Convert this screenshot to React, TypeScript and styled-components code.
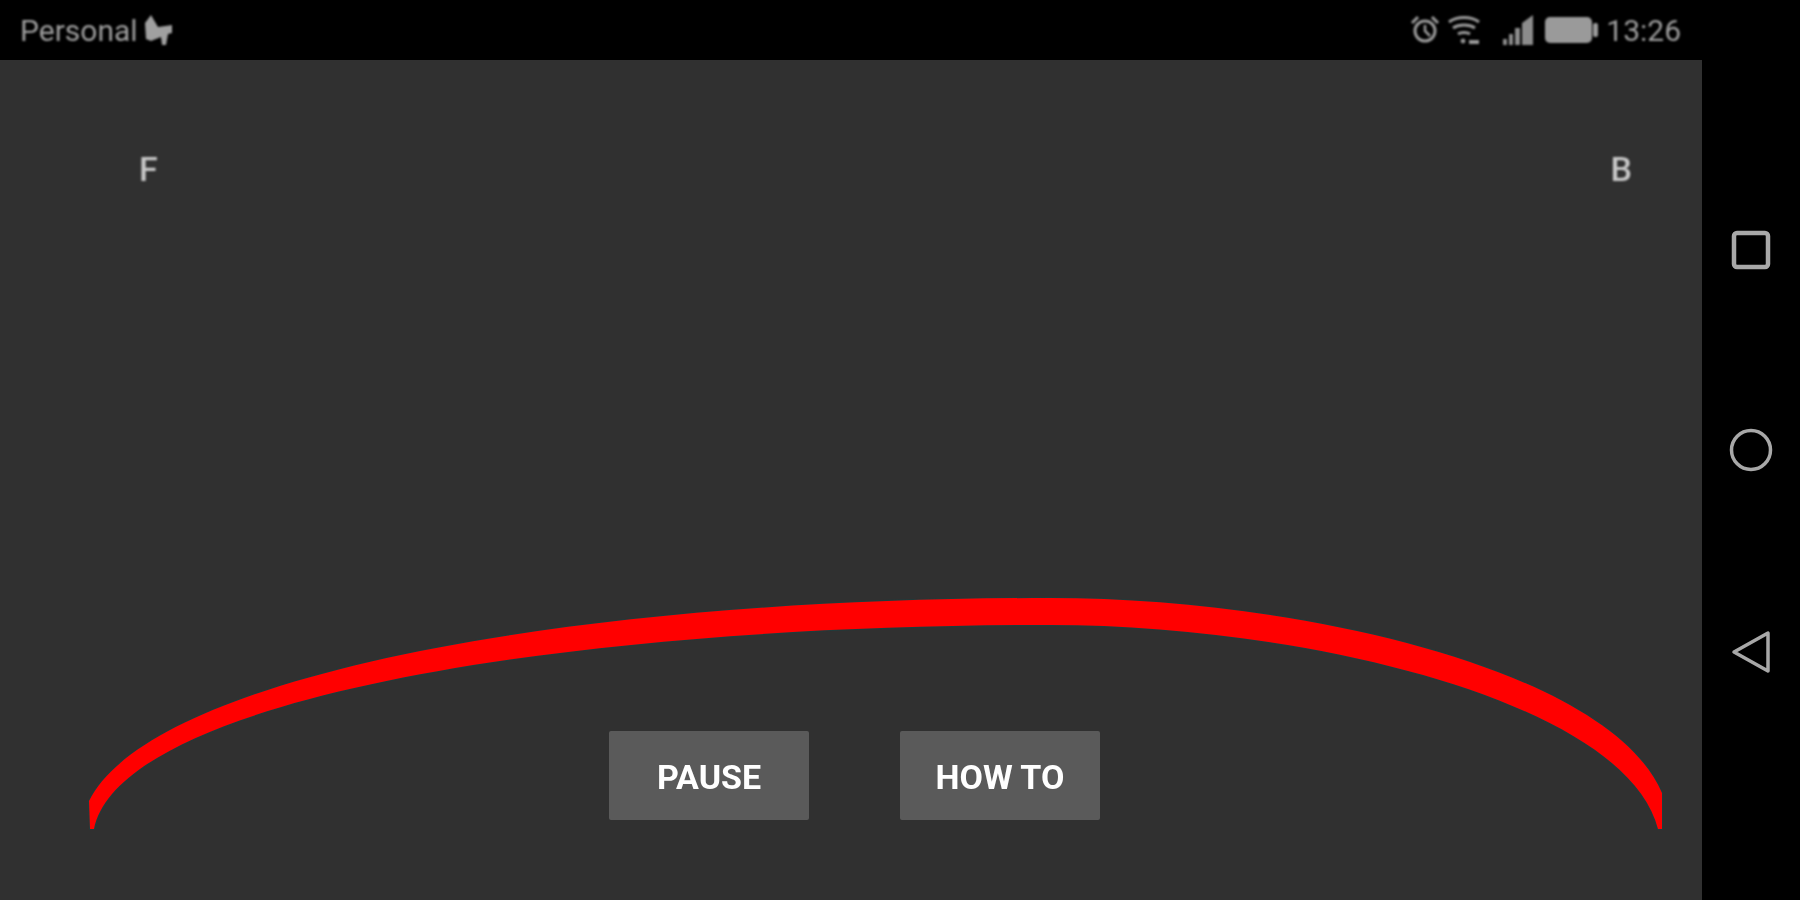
import React from 'react'
import styled, { createGlobalStyle } from 'styled-components'

const GlobalStyle = createGlobalStyle`
  html, body {
    margin: 0;
    padding: 0;
    background: #000;
  }
`

// red arc: outer edge left to right, then the thin tip, then inner edge back
const ARC_PATH =
  'M89 801 C150 678 560 598 1050 598 C1300 598 1610 670 1662 793 L1662 829 L1658 829 ' +
  'C1625 700 1300 625 1050 625 C560 625 120 700 94 829 L90 829 Z'

export default function App() {
  return (
    <>
      <GlobalStyle />
      <Screen>
        <Main>
          <StatusBar>
            <Carrier>
              Personal
              <svg width="30" height="32" viewBox="0 0 30 32">
                <path d="M1 9 L7 1 L14 13 L28 11 L28 19 L24 20 L22 31 L18 31 L17 23 L7 27 L2 25 Z" fill="#a0a0a0" />
              </svg>
            </Carrier>
            <StatusIcons>
              <svg width="30" height="30" viewBox="0 0 30 30" fill="none" stroke="#9a9a9a">
                <circle cx="15" cy="16" r="10" strokeWidth="3" />
                <path d="M15 10 V16 L20 21" strokeWidth="2.5" />
                <path d="M2 8 L8 2 M22 2 L28 8" strokeWidth="3" />
              </svg>
              <svg width="32" height="32" viewBox="0 0 32 32" fill="none" stroke="#9a9a9a" strokeWidth="3">
                <path d="M1 8 C9 2 23 2 31 8" />
                <path d="M5 14 C11 10 21 10 27 14" />
                <path d="M10 20 C13 18 19 18 22 20" />
                <circle cx="15" cy="27" r="2" fill="#9a9a9a" strokeWidth="1" />
                <path d="M21 28 H31" strokeWidth="4" />
              </svg>
              <SignalIcon width="32" height="32" viewBox="0 0 32 32" fill="#8c8c8c">
                <path d="M1 31 H5 V25 H1 Z M7 31 H11 V20 H7 Z M13 31 H18 V14 H13 Z M20 31 H31 V1 L20 9 Z" />
              </SignalIcon>
              <svg width="53" height="28" viewBox="0 0 53 28">
                <rect x="0" y="1" width="47" height="26" rx="5" fill="#9a9a9a" />
                <rect x="48" y="7" width="5" height="14" rx="2" fill="#9a9a9a" />
              </svg>
              <span>13:26</span>
            </StatusIcons>
          </StatusBar>
          <Stage>
            <ArcDrawing width="1702" height="900" viewBox="0 0 1702 900">
              <path d={ARC_PATH} fill="#ff0000" stroke="#1f3c3c" strokeWidth="2" strokeLinejoin="round" paintOrder="stroke" />
            </ArcDrawing>
            <Labels>
              <Label>F</Label>
              <Label>B</Label>
            </Labels>
            <Buttons>
              <ActionButton><span>PAUSE</span></ActionButton>
              <ActionButton><span>HOW TO</span></ActionButton>
            </Buttons>
          </Stage>
        </Main>
        <NavBar>
          <svg width="40" height="40" viewBox="0 0 40 40" fill="none" stroke="#a8a8a8" strokeWidth="4.5">
            <rect x="3" y="3" width="34" height="34" rx="3" />
          </svg>
          <svg width="44" height="44" viewBox="0 0 44 44" fill="none" stroke="#a8a8a8" strokeWidth="3.5">
            <circle cx="22" cy="22" r="19.5" />
          </svg>
          <svg width="40" height="44" viewBox="0 0 40 44" fill="none" stroke="#a8a8a8" strokeWidth="3.5" strokeLinejoin="round">
            <path d="M3 22 L37 3 V41 Z" />
          </svg>
        </NavBar>
      </Screen>
    </>
  )
}

const Screen = styled.div`
  display: flex;
  width: 1800px;
  height: 900px;
  overflow: hidden;
  background: #000;
  font-family: Roboto, "Liberation Sans", sans-serif;
`
const Main = styled.div`
  display: flex;
  flex-direction: column;
  width: 1702px;
  height: 100%;
`
const StatusBar = styled.div`
  display: flex;
  align-items: center;
  justify-content: space-between;
  height: 60px;
  padding: 0 21px 0 20px;
  background: #000;
  box-sizing: border-box;
  color: #9e9e9e;
  font-size: 30px;
  filter: blur(1px);
`
const Carrier = styled.div`
  display: flex;
  align-items: center;
  gap: 6px;
`
const StatusIcons = styled.div`
  display: flex;
  align-items: center;
  gap: 8px;
`
const SignalIcon = styled.svg`
  margin: 0 3px 0 14px;
`
const Stage = styled.div`
  position: relative;
  display: flex;
  flex-direction: column;
  justify-content: space-between;
  flex: 1;
  background: #303030;
`
const ArcDrawing = styled.svg`
  position: absolute;
  left: 0;
  top: -60px;
`
const Labels = styled.div`
  display: flex;
  justify-content: space-between;
  padding: 89px 70px 0 139px;
`
const Label = styled.span`
  color: #c8c8c8;
  font-size: 34px;
  font-weight: 500;
  line-height: 40px;
  filter: blur(0.9px);
`
const Buttons = styled.div`
  position: relative;
  display: flex;
  justify-content: center;
  gap: 91px;
  padding: 0 0 80px 7px;
`
const ActionButton = styled.div`
  display: flex;
  align-items: center;
  justify-content: center;
  width: 200px;
  height: 89px;
  padding-top: 2px;
  box-sizing: border-box;
  background: #5a5a5a;
  border-radius: 2px;
  color: #fff;
  font-size: 34px;
  font-weight: 700;

  span {
    filter: blur(0.6px);
  }
`
const NavBar = styled.div`
  display: flex;
  flex-direction: column;
  align-items: center;
  gap: 158px;
  width: 98px;
  padding-top: 230px;
  box-sizing: border-box;
  filter: blur(0.5px);
`
